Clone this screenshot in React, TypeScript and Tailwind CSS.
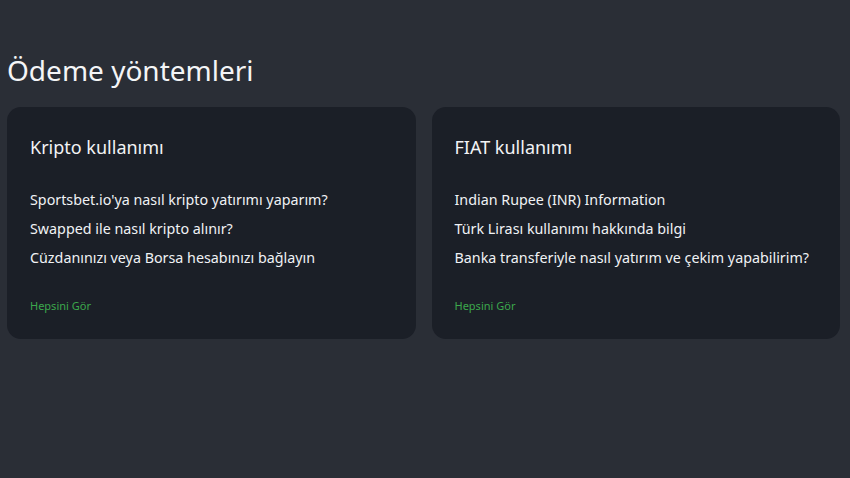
const sections = [
  {
    title: 'Kripto kullanımı',
    links: [
      "Sportsbet.io'ya nasıl kripto yatırımı yaparım?",
      'Swapped ile nasıl kripto alınır?',
      'Cüzdanınızı veya Borsa hesabınızı bağlayın',
    ],
  },
  {
    title: 'FIAT kullanımı',
    links: [
      'Indian Rupee (INR) Information',
      'Türk Lirası kullanımı hakkında bilgi',
      'Banka transferiyle nasıl yatırım ve çekim yapabilirim?',
    ],
  },
]

export default function App() {
  return (
    <div
      className="min-h-[478px] w-full bg-[#2a2e36] px-[7px] pt-[50px] text-white"
      style={{ fontFamily: '"Noto Sans", "Open Sans", sans-serif' }}
    >
      <h1 className="text-[28px] leading-[40px] font-normal text-[#f4f5f7]">Ödeme yöntemleri</h1>
      <div className="mt-[17px] grid grid-cols-2 gap-4 pr-[3px]">
        {sections.map((s) => (
          <div key={s.title} className="h-[232px] rounded-[14px] bg-[#1b1f27] px-[23px] pt-[28px]">
            <h2 className="text-[18px] leading-[24px] text-[#f2f3f5]">{s.title}</h2>
            <ul className="mt-[26px] flex flex-col">
              {s.links.map((l) => (
                <li key={l} className="whitespace-nowrap text-[14.3px] leading-[29px] text-[#f0f2f5]">
                  {l}
                </li>
              ))}
            </ul>
            <a className="mt-[26px] block text-[11px] leading-[16px] text-[#3ba84c]">Hepsini Gör</a>
          </div>
        ))}
      </div>
    </div>
  )
}
